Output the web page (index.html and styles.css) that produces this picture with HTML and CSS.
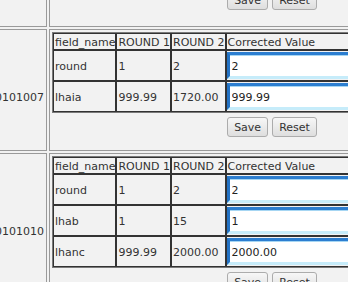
FILE: index.html
```html
<!DOCTYPE html>
<html lang="en">
<head>
    <meta charset="UTF-8">
    <meta name="viewport" content="width=device-width, initial-scale=1.0">
    <title>Round Corrections</title>
    <link rel="stylesheet" href="styles.css">
</head>
<body>
    <table class="sheet">
        <tr class="prev">
            <td class="id"></td>
            <td class="entry">
                <div class="actions">
                    <button type="button">Save</button>
                    <button type="button">Reset</button>
                </div>
            </td>
        </tr>
        <tr>
            <td class="id">0101007</td>
            <td class="entry">
                <table class="rounds">
                    <tr>
                        <td class="fit">field_name</td>
                        <td class="fit">ROUND 1</td>
                        <td class="fit">ROUND 2</td>
                        <td>Corrected Value</td>
                    </tr>
                    <tr>
                        <td>round</td>
                        <td>1</td>
                        <td>2</td>
                        <td class="value"><input type="text" name="round" value="2"></td>
                    </tr>
                    <tr>
                        <td>lhaia</td>
                        <td>999.99</td>
                        <td>1720.00</td>
                        <td class="value"><input type="text" name="lhaia" value="999.99"></td>
                    </tr>
                </table>
                <div class="actions">
                    <button type="button">Save</button>
                    <button type="button">Reset</button>
                </div>
            </td>
        </tr>
        <tr>
            <td class="id tall">0101010</td>
            <td class="entry">
                <table class="rounds">
                    <tr>
                        <td class="fit">field_name</td>
                        <td class="fit">ROUND 1</td>
                        <td class="fit">ROUND 2</td>
                        <td>Corrected Value</td>
                    </tr>
                    <tr>
                        <td>round</td>
                        <td>1</td>
                        <td>2</td>
                        <td class="value"><input type="text" name="round" value="2"></td>
                    </tr>
                    <tr>
                        <td>lhab</td>
                        <td>1</td>
                        <td>15</td>
                        <td class="value"><input type="text" name="lhab" value="1"></td>
                    </tr>
                    <tr>
                        <td>lhanc</td>
                        <td>999.99</td>
                        <td>2000.00</td>
                        <td class="value"><input type="text" name="lhanc" value="2000.00"></td>
                    </tr>
                </table>
                <div class="actions">
                    <button type="button">Save</button>
                    <button type="button">Reset</button>
                </div>
            </td>
        </tr>
    </table>
</body>
</html>
```

FILE: styles.css
```css
body {
    font-family: "DejaVu Sans", Verdana, sans-serif;
    font-size: 11px;
    background-color: #f2f2f2;
    color: #333;
    margin: 0;
    padding: 0;
    overflow: hidden;
}
.sheet {
    width: 507px;
    border-collapse: separate;
    border-spacing: 2px;
    margin: -19px 0 0 -10px;
}
.sheet > tbody > tr > td {
    border: 1px solid #9a9a9a;
}
.id {
    vertical-align: middle;
    white-space: nowrap;
    padding: 17px 2px 2px;
}
.id.tall {
    padding-bottom: 14px;
}
.entry {
    width: 440px;
    padding: 2px;
    vertical-align: top;
}
.rounds {
    width: 100%;
    border-collapse: separate;
    border-spacing: 0;
    border: 1px solid #7a7a7a;
}
.rounds td {
    border: 1px solid #333;
    padding: 3px 0 0 1px;
    line-height: 12px;
    white-space: nowrap;
}
.rounds .fit {
    width: 1%;
}
.rounds .value {
    padding: 1px 0;
}
.rounds input {
    display: block;
    width: 100%;
    height: 27px;
    box-sizing: border-box;
    margin: 0;
    padding: 5px 2px 3px;
    font-family: inherit;
    font-size: 11px;
    color: #222;
    background: #fff;
    border-style: solid;
    border-width: 3px;
    border-color: #2c7ed0 #c6ecfa #c6ecfa #2372c4;
    box-shadow: inset 0 1px 0 #a6d6f3;
    outline: none;
}
.actions {
    display: flex;
    justify-content: center;
    gap: 4px;
    padding: 4px 0 11px;
}
.prev .actions {
    padding-bottom: 14px;
}
button {
    height: 20px;
    box-sizing: border-box;
    padding: 0 6px;
    font-family: inherit;
    font-size: 11px;
    color: #333;
    background: linear-gradient(#f7f7f7, #dedede);
    border: 1px solid #acacac;
    border-radius: 3px;
    cursor: pointer;
}
button:hover {
    background: linear-gradient(#fbfbfb, #e6e6e6);
}
```
